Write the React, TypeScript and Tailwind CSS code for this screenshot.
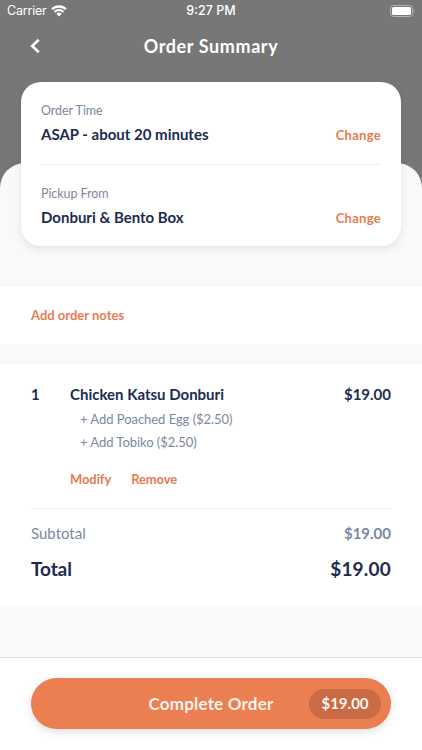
function StatusBar() {
  return (
    <div className="grid h-[22px] grid-cols-3 items-center px-[7px] font-[Inter,sans-serif] text-white">
      <div className="flex items-center gap-[4px]">
        <span className="text-[12.5px] leading-none tracking-[-0.2px]">Carrier</span>
        <svg width="16" height="12" viewBox="0 0 16 12" fill="none" stroke="currentColor">
          <path d="M1.1 4.3a9.9 9.9 0 0 1 13.8 0" strokeWidth="2.3" />
          <path d="M3.5 6.9a6.4 6.4 0 0 1 9 0" strokeWidth="2.1" />
          <path d="M8 11.4 5.4 8.7a3.8 3.8 0 0 1 5.2 0z" fill="currentColor" stroke="none" />
        </svg>
      </div>
      <span className="text-center text-[12.5px] leading-none font-medium">9:27 PM</span>
      <svg className="justify-self-end" width="25" height="12" viewBox="0 0 25 12">
        <rect x="0.5" y="0.5" width="22" height="11" rx="3" fill="none" stroke="#b2b2b2" />
        <rect x="2" y="2" width="19" height="8" rx="1.5" fill="#fff" />
        <path d="M23.6 4c1.1.4 1.1 3.6 0 4z" fill="#b2b2b2" />
      </svg>
    </div>
  );
}

function Header() {
  return (
    <header className="grid h-12 grid-cols-[60px_1fr_60px] items-center text-white">
      <button className="pl-[30px]" aria-label="Back">
        <svg width="10" height="14" viewBox="0 0 10 14" fill="none" stroke="currentColor" strokeWidth="2.6">
          <path d="M8.7.7 2.2 7l6.5 6.3" />
        </svg>
      </button>
      <h1 className="text-center text-[18px] leading-6 font-bold tracking-[0.6px]">Order Summary</h1>
    </header>
  );
}

function DetailRow({ label, value }: { label: string; value: string }) {
  return (
    <div className="flex h-[82px] items-start justify-between pt-5">
      <div>
        <p className="pt-px text-[12.5px] leading-4 tracking-[-0.05px] text-[#7c87a1]">{label}</p>
        <p className="mt-[5px] text-[15px] leading-5 font-bold">{value}</p>
      </div>
      <button className="mt-[25px] text-[13px] leading-4 font-bold tracking-[0.3px] text-[#e67c50]">
        Change
      </button>
    </div>
  );
}

function OrderItem() {
  return (
    <div className="flex h-[145px] border-b border-[#f1f1f1] pt-5">
      <span className="w-[39px] text-[15px] leading-5 font-bold">1</span>
      <div className="flex-1">
        <div className="flex justify-between text-[15px] leading-5 font-bold">
          <span>Chicken Katsu Donburi</span>
          <span>$19.00</span>
        </div>
        <ul className="mt-1 pl-2.5 text-[13px] leading-[23px] tracking-[-0.04px] text-[#7c87a1]">
          <li>+ Add Poached Egg ($2.50)</li>
          <li>+ Add Tobiko ($2.50)</li>
        </ul>
        <div className="mt-[17px] flex gap-5 text-[13px] leading-4 font-bold tracking-[-0.1px] text-[#e67c50]">
          <button>Modify</button>
          <button>Remove</button>
        </div>
      </div>
    </div>
  );
}

export default function App() {
  return (
    <div className="flex h-[750px] w-[422px] flex-col overflow-hidden bg-[#777777] font-[Lato,sans-serif] text-[#1c2b4f]">
      <div className="h-[163px] shrink-0">
        <StatusBar />
        <Header />
      </div>

      <main className="flex-1 rounded-t-[25px] bg-[#f9f9f9]">
        <section className="mx-[21px] -mt-[81px] h-[164px] rounded-[20px] bg-white px-5 shadow-[0_3px_8px_rgba(0,0,0,0.09)]">
          <DetailRow label="Order Time" value="ASAP - about 20 minutes" />
          <div className="h-px bg-[#f0f0f0]" />
          <DetailRow label="Pickup From" value="Donburi & Bento Box" />
        </section>

        <section className="mt-[41px] flex h-[57px] items-center bg-white px-[31px] pb-0.5">
          <button className="text-[13px] leading-4 font-bold text-[#e67c50]">
            Add order notes
          </button>
        </section>

        <section className="mt-5 h-[242px] bg-white px-[31px]">
          <OrderItem />
          <div className="mt-3.5 flex justify-between text-[15px] leading-5 text-[#7c87a1]">
            <span>Subtotal</span>
            <span className="font-bold">$19.00</span>
          </div>
          <div className="mt-3.5 flex justify-between text-[19px] leading-6 font-bold">
            <span className="tracking-[-0.1px]">Total</span>
            <span className="tracking-[0.2px]">$19.00</span>
          </div>
        </section>
      </main>

      <footer className="h-[93px] shrink-0 border-t border-[#dedede] bg-white px-[31px] pt-5">
        <button className="grid h-[51px] w-full grid-cols-[1fr_auto_1fr] items-center rounded-full bg-[#ec7f51] text-[#fff4ed] shadow-[0_3px_8px_rgba(0,0,0,0.12)]">
          <span className="col-start-2 text-[17px] leading-6 font-bold tracking-[0.2px]">Complete Order</span>
          <span className="mr-2.5 flex h-[30px] w-[72px] items-center justify-center justify-self-end rounded-full bg-[#c96b45] text-[15px] font-bold">
            $19.00
          </span>
        </button>
      </footer>
    </div>
  );
}
